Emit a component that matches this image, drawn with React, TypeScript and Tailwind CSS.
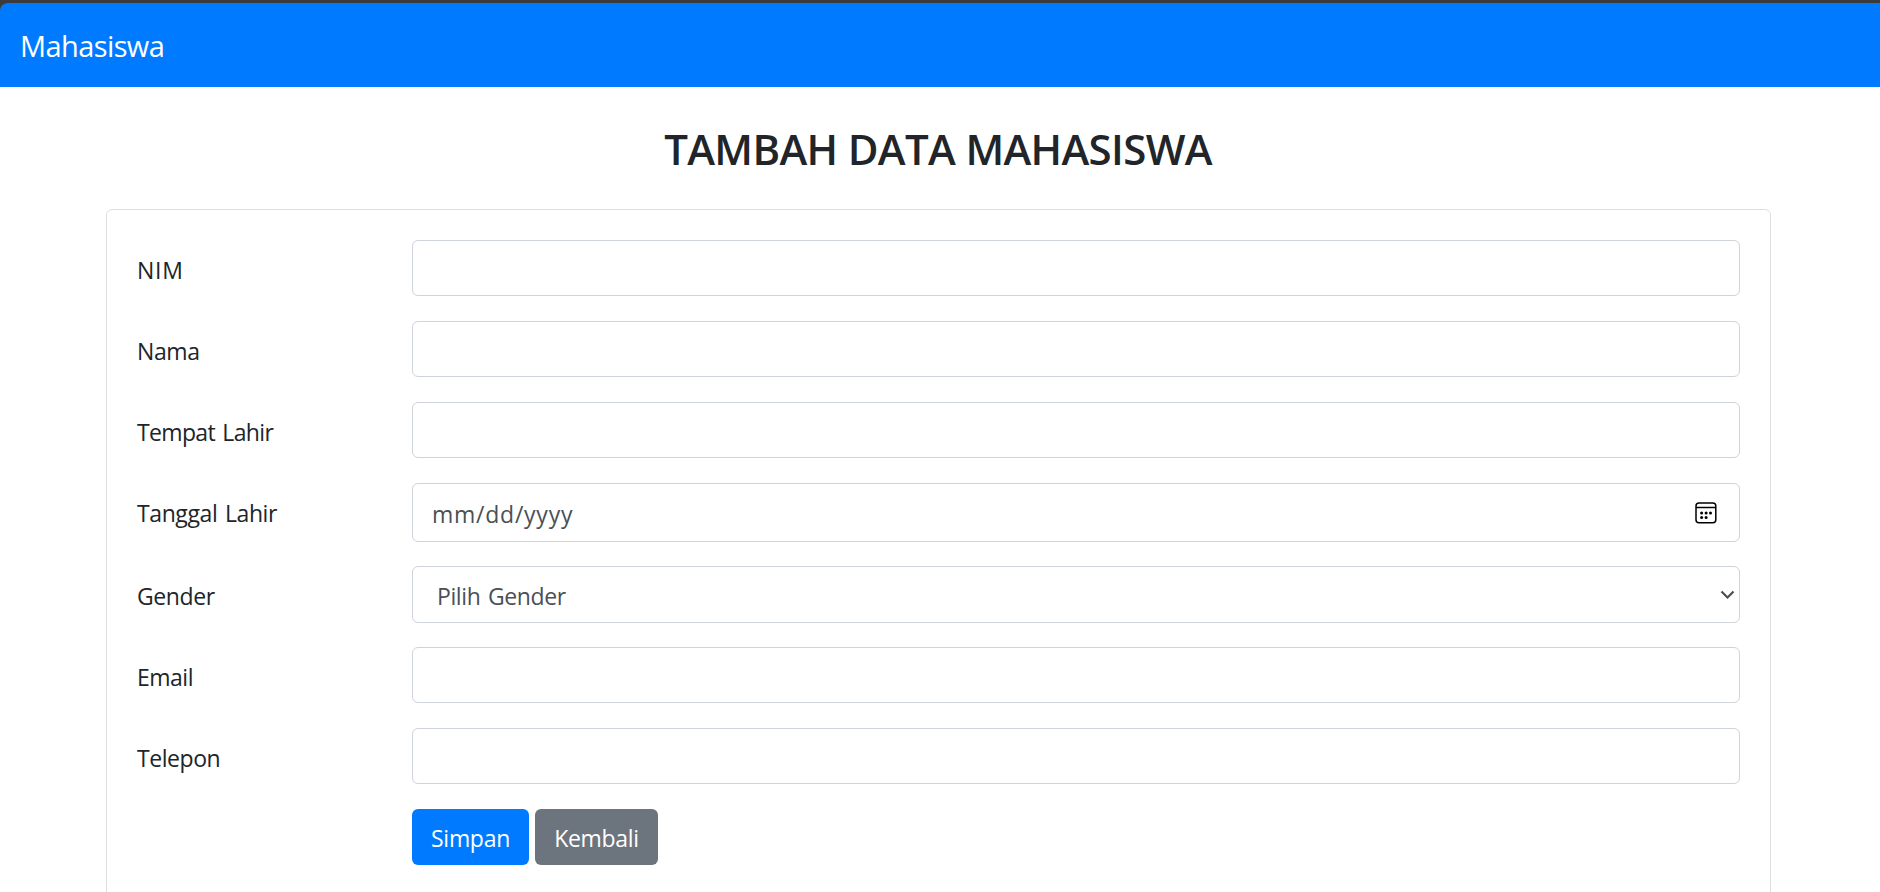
import type { ReactNode } from 'react';

const control = 'flex w-[1328px] shrink-0 items-center rounded-[6px] border border-[#ced4da] bg-white text-[#495057]';

function Row({ label, spacing, className, children }: { label: string; spacing: string; className: string; children: ReactNode }) {
  return (
    <div className={`flex ${className}`}>
      <label className={`w-[275px] shrink-0 whitespace-nowrap pt-[12px] leading-[37px] [word-spacing:2px] ${spacing}`}>{label}</label>
      {children}
    </div>
  );
}

function TextInput() {
  return <input type="text" className={`${control} h-[56px] px-[18px] outline-none`} />;
}

function CalendarIcon() {
  return (
    <svg width="22" height="22" viewBox="0 0 22 22" fill="none" stroke="#000" strokeWidth="1.5">
      <rect x="1" y="1" width="19.8" height="19.8" rx="3" />
      <path d="M1 5.5h20" />
      <g fill="#000" stroke="none">
        <circle cx="6.6" cy="11" r="1.5" />
        <circle cx="11.1" cy="11" r="1.5" />
        <circle cx="15.5" cy="11" r="1.5" />
        <circle cx="6.6" cy="15.5" r="1.5" />
        <circle cx="11.1" cy="15.5" r="1.5" />
      </g>
    </svg>
  );
}

export default function App() {
  return (
    <div className="h-[892px] overflow-hidden bg-white font-['Open_Sans','Noto_Sans',sans-serif] text-[23px] text-[#212529]">
      <div className="bg-[#3b3b3b] pt-[3px]">
        <nav className="flex h-[84px] items-center rounded-tl-[8px] bg-[#007bff] px-[20px]">
          <a className="pt-px text-[29px] leading-[45px] tracking-[-0.6px] text-white">Mahasiswa</a>
        </nav>
      </div>
      <h2 className="mt-[37px] pr-[4px] text-center text-[42px] leading-[50px] font-semibold tracking-[-0.65px]">
        TAMBAH DATA MAHASISWA
      </h2>
      <main className="ml-[106px] mt-[35px] h-[720px] w-[1665px] rounded-[6px] border border-[#dfdfdf] pl-[30px] pt-[30px]">
        <form className="flex flex-col">
          <Row label="NIM" spacing="tracking-[0.7px]" className="h-[81px]"><TextInput /></Row>
          <Row label="Nama" spacing="tracking-[-0.4px]" className="h-[81px]"><TextInput /></Row>
          <Row label="Tempat Lahir" spacing="tracking-[-0.65px]" className="h-[81px]"><TextInput /></Row>
          <Row label="Tanggal Lahir" spacing="tracking-[-0.4px]" className="h-[83px]">
            <div className={`${control} h-[59px] justify-between pl-[19px] pr-[22px]`}>
              <span className="pt-[3px] tracking-[0.75px]">mm/dd/yyyy</span>
              <CalendarIcon />
            </div>
          </Row>
          <Row label="Gender" spacing="tracking-[-0.4px]" className="h-[81px]">
            <div className={`${control} h-[57px] justify-between pl-[24px] pr-[4px]`}>
              <span className="pt-[3px] tracking-[-0.4px] [word-spacing:2px]">Pilih Gender</span>
              <svg width="15" height="10" viewBox="0 0 15 10" fill="none" stroke="#495057" strokeWidth="2.2">
                <path d="M1.5 1.5l6 6 6-6" />
              </svg>
            </div>
          </Row>
          <Row label="Email" spacing="tracking-[-0.5px]" className="h-[81px]"><TextInput /></Row>
          <Row label="Telepon" spacing="tracking-[-0.45px]" className="h-[81px]"><TextInput /></Row>
          <div className="ml-[275px] flex gap-[6px] leading-9 text-white">
            <button type="button" className="h-[56px] w-[117px] rounded-[6px] bg-[#007bff] pt-px tracking-[-0.3px]">Simpan</button>
            <button type="button" className="h-[56px] w-[123px] rounded-[6px] bg-[#6c757d] pt-px tracking-[-0.3px]">Kembali</button>
          </div>
        </form>
      </main>
    </div>
  );
}
